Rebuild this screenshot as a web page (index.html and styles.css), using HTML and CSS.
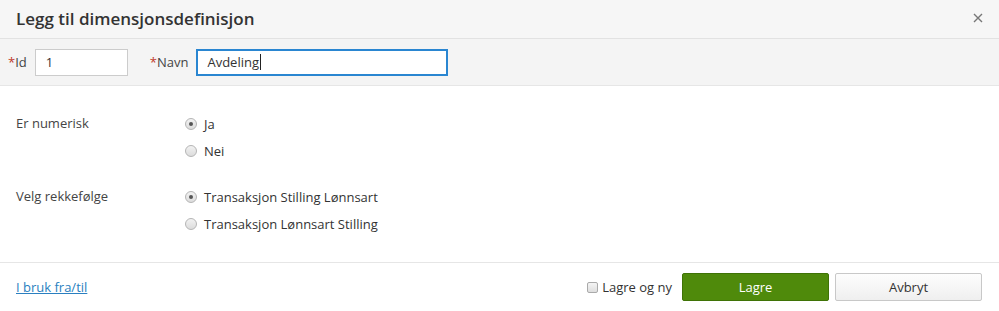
FILE: index.html
```html
<!DOCTYPE html>
<html lang="no">

<head>
    <meta charset="UTF-8">
    <meta name="viewport" content="width=device-width, initial-scale=1.0">
    <title>Legg til dimensjonsdefinisjon</title>
    <link rel="stylesheet" href="styles.css">
</head>

<body>
    <div class="dialog">
        <header class="dialog-header">
            <h2>Legg til dimensjonsdefinisjon</h2>
            <button class="close" aria-label="Lukk">
                <svg width="10" height="10" viewBox="0 0 10 10">
                    <path d="M1 1 L9 9 M9 1 L1 9" stroke="#777" stroke-width="1.4" fill="none" />
                </svg>
            </button>
        </header>

        <div class="id-row">
            <label class="field">
                <span class="req">*</span>Id
                <input type="text" class="input input-id" value="1">
            </label>
            <label class="field field-name">
                <span class="req">*</span>Navn
                <span class="input input-name focused">Avdeling<span class="caret"></span></span>
            </label>
        </div>

        <div class="dialog-body">
            <div class="group">
                <div class="group-label">Er numerisk</div>
                <div class="options">
                    <div class="option"><span class="radio checked"></span>Ja</div>
                    <div class="option"><span class="radio"></span>Nei</div>
                </div>
            </div>
            <div class="group">
                <div class="group-label">Velg rekkefølge</div>
                <div class="options">
                    <div class="option"><span class="radio checked"></span>Transaksjon Stilling Lønnsart</div>
                    <div class="option"><span class="radio"></span>Transaksjon Lønnsart Stilling</div>
                </div>
            </div>
        </div>

        <footer class="dialog-footer">
            <a href="#" class="link">I bruk fra/til</a>
            <div class="actions">
                <div class="check"><span class="checkbox"></span>Lagre og ny</div>
                <button class="btn btn-primary">Lagre</button>
                <button class="btn btn-default">Avbryt</button>
            </div>
        </footer>
    </div>
</body>

</html>
```

FILE: styles.css
```css
* {
    margin: 0;
    padding: 0;
    box-sizing: border-box;
}

body {
    font-family: "Open Sans", "Liberation Sans", sans-serif;
    font-size: 13px;
    color: #333;
    background-color: #fff;
}

.dialog {
    width: 999px;
}

.dialog-header {
    display: flex;
    align-items: center;
    justify-content: space-between;
    height: 39px;
    padding: 0 16px 2px 16px;
    background-color: #f6f6f6;
    border-bottom: 1px solid #e2e2e2;
}

.dialog-header h2 {
    font-size: 17px;
    font-weight: 600;
    color: #333;
}

.close {
    border: none;
    background: none;
    display: flex;
    cursor: pointer;
}

.id-row {
    display: flex;
    align-items: center;
    height: 47px;
    padding-left: 8px;
    background-color: #f4f4f4;
    border-bottom: 1px solid #e6e6e6;
}

.field {
    display: flex;
    align-items: center;
    color: #444;
}

.field-name {
    margin-left: 22px;
}

.req {
    color: #c0392b;
}

.input {
    height: 27px;
    margin-left: 8px;
    padding: 0 10px;
    font-family: inherit;
    font-size: 13px;
    color: #333;
    border: 1px solid #ccc;
    background: #fff;
    outline: none;
}

.input-id {
    width: 93px;
}

.input-name {
    display: flex;
    align-items: center;
    width: 252px;
}

.input.focused {
    border: 2px solid #2a86d1;
    padding: 0 9px;
}

.caret {
    width: 1px;
    height: 16px;
    margin-left: 1px;
    background-color: #222;
}

.dialog-body {
    padding: 24px 16px 25px 16px;
    border-bottom: 1px solid #e6e6e6;
}

.group {
    display: flex;
}

.group + .group {
    margin-top: 19px;
}

.group-label {
    width: 169px;
    line-height: 27px;
    color: #444;
}

.option {
    display: flex;
    align-items: center;
    height: 27px;
    color: #333;
}

.radio {
    width: 12px;
    height: 12px;
    margin-right: 7px;
    border-radius: 50%;
    border: 1px solid #b5b5b5;
    background: linear-gradient(#f2f2f2, #dcdcdc);
    position: relative;
}

.radio.checked::after {
    content: "";
    position: absolute;
    left: 3px;
    top: 3px;
    width: 4px;
    height: 4px;
    border-radius: 50%;
    background-color: #555;
}

.dialog-footer {
    display: flex;
    align-items: center;
    justify-content: space-between;
    height: 48px;
    padding: 0 17px 0 16px;
}

.link {
    color: #2a7fc0;
    text-decoration: underline;
}

.actions {
    display: flex;
    align-items: center;
}

.check {
    display: flex;
    align-items: center;
    color: #333;
    margin-right: 10px;
}

.checkbox {
    width: 11px;
    height: 11px;
    margin-right: 4px;
    border: 1px solid #aaa;
    border-radius: 2px;
    background: linear-gradient(#f4f4f4, #dedede);
}

.btn {
    width: 147px;
    height: 28px;
    font-family: inherit;
    font-size: 13px;
    border-radius: 2px;
    cursor: pointer;
}

.btn-primary {
    color: #fff;
    background-color: #4f8a0b;
    border: 1px solid #3f7306;
}

.btn-default {
    margin-left: 6px;
    color: #333;
    background: linear-gradient(#fdfdfd, #efefef);
    border: 1px solid #c8c8c8;
}
```
